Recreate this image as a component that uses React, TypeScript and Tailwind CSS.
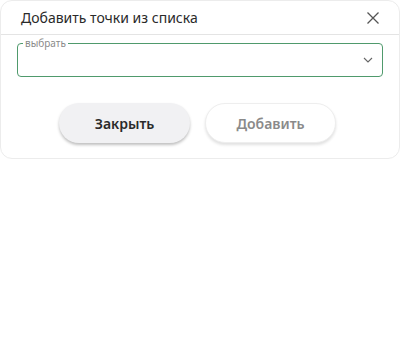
import React from 'react';

export default function App() {
  return (
    <div className="w-[400px] h-[341px] bg-white" style={{ fontFamily: '"Noto Sans", "Open Sans", sans-serif' }}>
      <div className="w-[400px] rounded-[12px] border border-[#ececec] bg-white">
        <div className="flex h-[34px] items-center justify-between border-b border-[#e4e4e4] pl-[20px] pr-[19px]">
          <span className="text-[14px] text-[#2a2a2a]">Добавить точки из списка</span>
          <svg width="14" height="14" viewBox="0 0 14 14" fill="none" stroke="#555" strokeWidth="1.3">
            <path d="M1.5 1.5l11 11M12.5 1.5l-11 11" />
          </svg>
        </div>
        <div className="px-[16px] pt-[8px]">
          <div className="relative h-[34px] rounded-[4px] border border-[#4f9a6c]">
            <span className="absolute -top-[7px] left-[5px] bg-white px-[2px] text-[10px] leading-[12px] text-[#8a8a8a]">выбрать</span>
            <svg className="absolute right-[9px] top-[13px]" width="10" height="6" viewBox="0 0 10 6" fill="none" stroke="#666" strokeWidth="1.1">
              <path d="M1 1l4 4 4-4" />
            </svg>
          </div>
        </div>
        <div className="flex justify-center gap-[15px] pt-[26px] pb-[15px] pr-[5px]">
          <button className="h-[40px] w-[131px] rounded-full bg-[#f1f1f3] text-[14px] font-semibold text-[#2a2a2a] shadow-[0_2px_3px_rgba(0,0,0,0.25)]">
            Закрыть
          </button>
          <button className="h-[40px] w-[131px] rounded-full border border-[#eeeeee] bg-white text-[14px] font-semibold text-[#8a8a8a] shadow-[0_2px_3px_rgba(0,0,0,0.12)]">
            Добавить
          </button>
        </div>
      </div>
    </div>
  );
}
